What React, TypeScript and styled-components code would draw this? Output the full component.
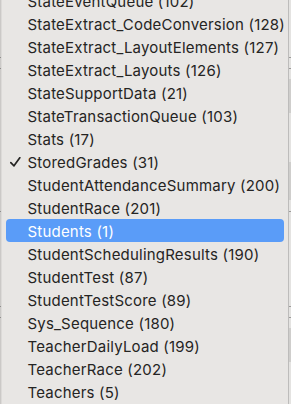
import React from "react";
import styled, { createGlobalStyle } from "styled-components";

const GlobalStyle = createGlobalStyle`
  html, body {
    margin: 0;
    padding: 0;
    background: #e8e6e4;
    overflow: hidden;
  }
`;

const Screen = styled.div`
  width: 291px;
  height: 404px;
  display: flex;
  flex-direction: row;
  overflow: hidden;
  font-family: Inter, "Noto Sans", "Liberation Sans", sans-serif;
`;

const Strip = styled.div<{ $width: number; $base: string }>`
  width: ${({ $width }) => $width}px;
  flex-shrink: 0;
  display: flex;
  flex-direction: column;
  background: ${({ $base }) => $base};
`;

const Segment = styled.div<{ $h: number; $tone: string }>`
  height: ${({ $h }) => $h}px;
  flex-shrink: 0;
  background: ${({ $tone }) => $tone};
`;

const Menu = styled.div`
  flex: 1;
  background: #e8e6e4;
  border-left: 1px solid #dcdad8;
  border-right: 1px solid #bdbcbb;
  padding: 0 4px 0 4px;
  overflow: hidden;
`;

const List = styled.ul`
  list-style: none;
  margin: -11px 0 0 0;
  padding: 0;
  display: flex;
  flex-direction: column;
`;

const Item = styled.li<{ $selected?: boolean }>`
  height: 23px;
  box-sizing: border-box;
  padding-top: 1px;
  display: flex;
  align-items: center;
  border-radius: 4px;
  font-size: 15px;
  letter-spacing: 0.2px;
  white-space: nowrap;
  background: ${({ $selected }) => ($selected ? "#5a9cf8" : "transparent")};
  color: ${({ $selected }) => ($selected ? "#ffffff" : "#252423")};
`;

const Gutter = styled.span`
  width: 21.5px;
  flex-shrink: 0;
  display: flex;
  align-items: center;
  padding-left: 4px;
  box-sizing: border-box;
`;

const Check = () => (
  <svg width="11" height="11" viewBox="0 0 11 11">
    <polyline
      points="0.8,5.6 4,8.8 9.8,0.8"
      fill="none"
      stroke="#252423"
      strokeWidth="1.7"
      strokeLinecap="round"
      strokeLinejoin="round"
    />
  </svg>
);

const tables: [string, number][] = [
  ["StateEventQueue", 102],
  ["StateExtract_CodeConversion", 128],
  ["StateExtract_LayoutElements", 127],
  ["StateExtract_Layouts", 126],
  ["StateSupportData", 21],
  ["StateTransactionQueue", 103],
  ["Stats", 17],
  ["StoredGrades", 31],
  ["StudentAttendanceSummary", 200],
  ["StudentRace", 201],
  ["Students", 1],
  ["StudentSchedulingResults", 190],
  ["StudentTest", 87],
  ["StudentTestScore", 89],
  ["Sys_Sequence", 180],
  ["TeacherDailyLoad", 199],
  ["TeacherRace", 202],
  ["Teachers", 5],
];

const leftSegments: [number, string][] = [
  [57, "#cbc9c7"], [1, "#8f8e8d"], [10, "#cbc9c7"], [1, "#8f8e8d"],
  [142, "#cbc9c7"], [1, "#8f8e8d"], [94, "#cbc9c7"], [1, "#8f8e8d"],
  [10, "#cbc9c7"], [1, "#8f8e8d"], [90, "#cbc9c7"],
];

const rightSegments: [number, string][] = [
  [57, "#e4e3e1"], [1, "#9c9b9a"], [10, "#e4e3e1"], [1, "#9c9b9a"],
  [10, "#e4e3e1"], [34, "#cfcecc"], [49, "#e4e3e1"], [38, "#cfcecc"],
  [11, "#e4e3e1"], [1, "#9c9b9a"], [94, "#e4e3e1"], [1, "#9c9b9a"],
  [10, "#e4e3e1"], [1, "#9c9b9a"], [10, "#e4e3e1"], [34, "#cfcecc"],
  [42, "#e4e3e1"],
];

function App() {
  return (
    <>
      <GlobalStyle />
      <Screen>
        <Strip $width={1} $base="#cbc9c7">
          {leftSegments.map(([h, tone], i) => (
            <Segment key={i} $h={h} $tone={tone} />
          ))}
        </Strip>
        <Menu>
          <List>
            {tables.map(([name, count]) => (
              <Item key={name} $selected={name === "Students"}>
                <Gutter>{name === "StoredGrades" && <Check />}</Gutter>
                {name} ({count})
              </Item>
            ))}
          </List>
        </Menu>
        <Strip $width={2} $base="#e4e3e1">
          {rightSegments.map(([h, tone], i) => (
            <Segment key={i} $h={h} $tone={tone} />
          ))}
        </Strip>
      </Screen>
    </>
  );
}

export default App;
